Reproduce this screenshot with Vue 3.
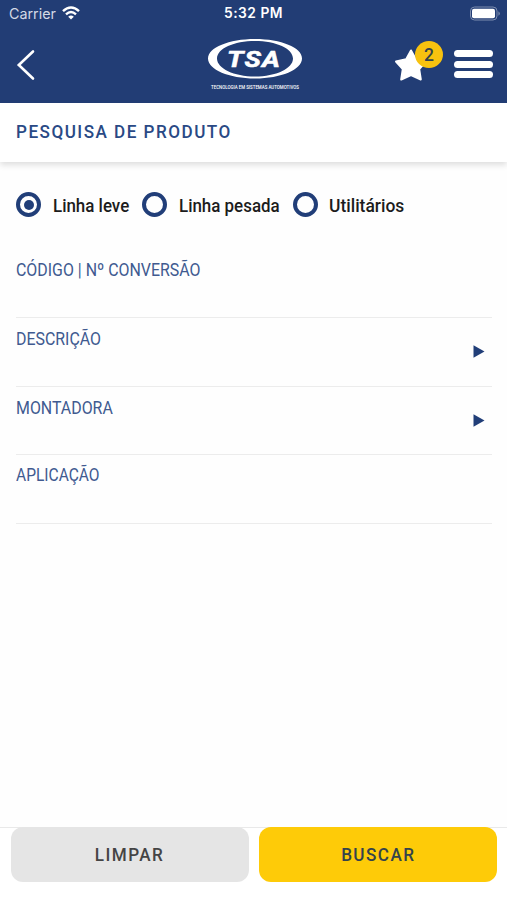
<template>
    <div class="screen">
        <header class="header">
            <div class="status-bar">
                <div class="carrier">
                    <span class="carrier-name">Carrier</span>
                    <svg class="wifi" viewBox="0 0 18 14">
                        <path d="M1 5.2 Q9 -2.4 17 5.2" />
                        <path d="M4 8.3 Q9 3.8 14 8.3" />
                        <path class="wifi-dot" d="M6.2 10.7 Q9 8.4 11.8 10.7 L9 13.5Z" />
                    </svg>
                </div>
                <span class="time">5:32 PM</span>
                <svg class="battery" viewBox="0 0 32 15">
                    <rect class="battery-case" x="1.5" y="1" width="26.500" height="13" rx="4" />
                    <rect x="3" y="2.700" width="23" height="9.600" rx="2" />
                    <path class="battery-tip" d="M29.5 5.2 Q32 7.5 29.5 9.8Z" />
                </svg>
            </div>
            <div class="nav-bar">
                <button class="back" aria-label="Voltar">
                    <svg width="19" height="32" viewBox="0 0 19 32">
                        <path d="M17 2.500 L2.800 16 L17 29.500" />
                    </svg>
                </button>
                <svg class="logo" width="96" height="54" viewBox="0 0 96 54">
                    <path
                        fill-rule="evenodd"
                        d="M48 1 C74 1 95 9.5 95 20.5 C95 31.5 74 40.500 48 40.500 C22 40.500 1 31.5 1 20.5 C1 9.5 22 1 48 1Z M48 3 C27 3 10 10.5 10 20.5 C10 30.5 27 38.500 48 38.500 C69 38.500 86 30.5 86 20.5 C86 10.5 69 3 48 3Z"
                    />
                    <text class="logo-name" x="20" y="28.500" textLength="54" lengthAdjust="spacingAndGlyphs">TSA</text>
                    <text class="logo-tagline" x="4" y="50.500" textLength="88" lengthAdjust="spacingAndGlyphs">TECNOLOGIA EM SISTEMAS AUTOMOTIVOS</text>
                </svg>
                <div class="actions">
                    <div class="favorites">
                        <svg width="34" height="34" viewBox="0 0 34 34">
                            <path d="M17 2.500 L21.800 11.300 L32 13.600 L25.200 21.200 L26.800 31.500 L17 27 L7.200 31.500 L8.800 21.200 L2 13.600 L12.200 11.300Z" />
                        </svg>
                        <span class="badge">{{ favorites }}</span>
                    </div>
                    <div class="menu">
                        <i></i>
                        <i></i>
                        <i></i>
                    </div>
                </div>
            </div>
        </header>

        <div class="page-title"><span>PESQUISA DE PRODUTO</span></div>

        <main class="content">
            <div class="lines">
                <label
                    v-for="line in lines"
                    :key="line.id"
                    class="line"
                    :class="line.id"
                    @click="selected = line.id"
                >
                    <span class="radio" :class="{ checked: selected === line.id }"></span>
                    <span class="line-name">{{ line.name }}</span>
                </label>
            </div>

            <div v-for="field in fields" :key="field.label" class="field">
                <span class="field-label">{{ field.label }}</span>
                <svg v-if="field.select" class="arrow" width="12" height="13" viewBox="0 0 12 13">
                    <path d="M0.500 0.300 L11.500 6.500 L0.500 12.700Z" />
                </svg>
            </div>
        </main>

        <footer class="footer">
            <button class="btn clear" @click="selected = 'leve'"><span>LIMPAR</span></button>
            <button class="btn search"><span>BUSCAR</span></button>
        </footer>
    </div>
</template>

<script setup>
import { ref } from 'vue'

const favorites = ref(2)
const selected = ref('leve')

const lines = [
    { id: 'leve', name: 'Linha leve' },
    { id: 'pesada', name: 'Linha pesada' },
    { id: 'utilitarios', name: 'Utilitários' }
]

const fields = [
    { label: 'CÓDIGO | Nº CONVERSÃO', select: false },
    { label: 'DESCRIÇÃO', select: true },
    { label: 'MONTADORA', select: true },
    { label: 'APLICAÇÃO', select: false }
]
</script>

<style>
body {
    margin: 0;
    background: #fff;
}
</style>

<style scoped>
.screen {
    display: flex;
    flex-direction: column;
    height: 900px;
    overflow: hidden;
    font-family: Roboto, "Liberation Sans", sans-serif;
    background: #fefefe;
}

button {
    padding: 0;
    border: 0;
    background: none;
    font-family: inherit;
    cursor: pointer;
}

.header {
    height: 103px;
    flex-shrink: 0;
    background: #223d75;
}

.status-bar {
    display: grid;
    grid-template-columns: 1fr auto 1fr;
    align-items: center;
    box-sizing: border-box;
    height: 28px;
    padding: 0 6px 2px 9px;
    font-family: Inter, "Liberation Sans", sans-serif;
    color: #fff;
}

.carrier {
    display: flex;
    align-items: center;
    gap: 6px;
}

.carrier-name {
    font-size: 14.3px;
    color: #d3d9e6;
}

.wifi {
    width: 18px;
    height: 14px;
    fill: none;
    stroke: #fff;
    stroke-width: 2.4;
}

.wifi .wifi-dot {
    fill: #fff;
    stroke: none;
}

.time {
    padding-right: 3px;
    font-weight: 600;
    font-size: 13.8px;
    letter-spacing: 0.5px;
}

.battery {
    justify-self: end;
    width: 32px;
    height: 15px;
    fill: #fff;
}

.battery .battery-case {
    fill: none;
    stroke: #7d8daf;
    stroke-width: 1;
}

.battery .battery-tip {
    fill: #8d9bb8;
}

.nav-bar {
    display: grid;
    grid-template-columns: 1fr 96px 1fr;
    height: 75px;
    padding: 0 14px 0 16px;
}

.back {
    justify-self: start;
    height: 32px;
    margin-top: 21px;
}

.back svg {
    display: block;
    fill: none;
    stroke: #fff;
    stroke-width: 2.6;
    stroke-linecap: round;
}

.logo {
    margin-top: 10px;
    fill: #fff;
    overflow: visible;
}

.logo-name {
    font-family: Roboto, sans-serif;
    font-size: 22.5px;
    font-weight: 700;
    font-style: italic;
    letter-spacing: 1px;
    stroke: #fff;
    stroke-width: 0.6;
}

.logo-tagline {
    font-size: 5px;
    font-weight: 500;
}

.actions {
    display: flex;
    justify-content: flex-end;
    gap: 26px;
}

.favorites {
    position: relative;
    width: 34px;
    height: 34px;
    margin-top: 20px;
}

.favorites svg {
    display: block;
    fill: #fff;
    stroke: #fff;
    stroke-width: 2;
    stroke-linejoin: round;
}

.badge {
    position: absolute;
    top: -7px;
    left: 21px;
    width: 28px;
    height: 27px;
    border-radius: 50%;
    background: #f7c20f;
    color: #33424b;
    font-size: 17.5px;
    font-weight: 500;
    line-height: 28px;
    text-align: center;
}

.menu {
    display: flex;
    flex-direction: column;
    gap: 3.5px;
    margin-top: 22px;
}

.menu i {
    width: 39px;
    height: 7px;
    border-radius: 4px;
    background: #fff;
}

.page-title {
    height: 59px;
    flex-shrink: 0;
    padding-left: 16px;
    background: #fff;
    box-shadow: 0 3px 6px rgba(0, 0, 0, 0.13);
    color: #294985;
    font-size: 19px;
    font-weight: 500;
    line-height: 58px;
    letter-spacing: 1.65px;
}

.page-title span,
.line-name,
.field-label,
.btn span {
    display: inline-block;
    white-space: nowrap;
    transform-origin: left center;
}

.page-title span {
    transform: scaleX(0.9);
}

.content {
    flex: 1;
    padding: 30px 15px 0 16px;
}

.lines {
    display: flex;
    height: 25px;
    margin-bottom: 33px;
}

.line {
    display: flex;
    align-items: center;
    gap: 12px;
    cursor: pointer;
}

.line.leve {
    width: 126px;
}

.line.pesada {
    width: 150.5px;
}

.radio {
    box-sizing: border-box;
    display: flex;
    align-items: center;
    justify-content: center;
    flex-shrink: 0;
    width: 25px;
    height: 25px;
    border: 4px solid #213e78;
    border-radius: 50%;
}

.radio.checked::after {
    content: "";
    width: 10px;
    height: 10px;
    border-radius: 50%;
    background: #213e78;
}

.line-name {
    margin-top: 2px;
    font-size: 18px;
    font-weight: 500;
    color: #1c1c1c;
    transform: scaleX(0.94);
}

.line.utilitarios .line-name {
    margin-left: -1px;
    transform: scaleX(0.97);
}

.field {
    display: flex;
    justify-content: space-between;
    box-sizing: border-box;
    height: 68.4px;
    padding: 10px 7px 0 0;
    border-bottom: 1.5px solid #ececec;
}

.field:nth-child(2) .field-label {
    margin-top: -1px;
}

.field:last-child .field-label {
    margin-top: -1px;
    transform: scaleX(0.84);
}

.field-label {
    height: 22px;
    line-height: 22px;
    font-size: 18.5px;
    color: #405a90;
    transform: scaleX(0.86);
}

.arrow {
    margin-top: 17px;
    fill: #213e78;
}

.footer {
    display: grid;
    grid-template-columns: 1fr 1fr;
    gap: 10px;
    box-sizing: border-box;
    height: 73px;
    padding: 0 10px 0 11px;
    border-top: 1px solid #e9e9e9;
    background: #fff;
}

.btn {
    height: 55px;
    margin-top: -1px;
    border-radius: 12px;
    font-size: 19px;
    font-weight: 500;
    letter-spacing: 1.6px;
}

.btn span {
    transform: scaleX(0.9);
    transform-origin: center;
}

.clear {
    background: #e5e5e5;
    color: #444;
}

.search {
    background: #fecb08;
    color: #34434c;
}
</style>
